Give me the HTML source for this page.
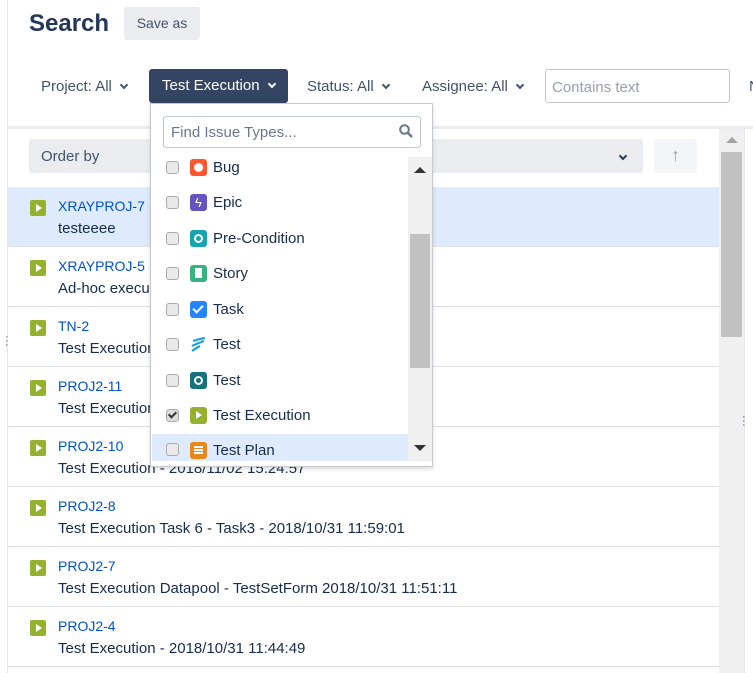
<!DOCTYPE html>
<html><head><style>
*{box-sizing:border-box;margin:0;padding:0}
body{width:753px;height:673px;overflow:hidden;background:#fff;font-family:"Liberation Sans",Arial,sans-serif;color:#172b4d;position:relative}
.a{position:absolute}
.t{font-size:15px;color:#42526e}
.chev{display:inline-block;width:6px;height:6px;border-right:2px solid #42526e;border-bottom:2px solid #42526e;transform:rotate(45deg);margin-left:9px;position:relative;top:-3px}
.row{position:absolute;left:8px;width:711px;height:60px;border-bottom:1px solid #dfe1e6}
.ic{position:absolute;left:22px;top:13px;width:16px;height:16px;background:#94b22f;border-radius:2px}
.ic:after{content:"";position:absolute;left:6px;top:4px;border-left:6px solid #fff;border-top:4px solid transparent;border-bottom:4px solid transparent}
.key{position:absolute;left:50px;top:11px;font-size:14px;color:#0052cc}
.sum{position:absolute;left:50px;top:33px;font-size:15px;color:#172b4d;white-space:nowrap}
.it{position:absolute;left:1px;width:256px;height:28px}
.cb{position:absolute;left:14px;top:7px;width:13px;height:13px;border:1px solid #aaa;border-radius:3px;background:#e9e9e9}
.ii{position:absolute;left:38px;top:5px;width:17px;height:17px;border-radius:3px}
.il{position:absolute;left:61px;top:5px;font-size:15px;color:#172b4d}
</style></head><body>
<div class="a" style="left:7px;top:0;width:1px;height:673px;background:#e6e6e9"></div>
<div class="a" style="left:29px;top:10px;font-size:24px;font-weight:bold;color:#253858">Search</div>
<div class="a" style="left:124px;top:7px;width:76px;height:33px;background:#ebecf0;border-radius:3px;font-size:14px;color:#42526e;text-align:center;line-height:33px">Save as</div>
<div class="a t" style="left:41px;top:78px">Project: All<span class="chev"></span></div>
<div class="a" style="left:149px;top:69px;width:139px;height:34px;background:#344563;border-radius:3px;color:#fff;font-size:15px;line-height:34px;padding-left:13px">Test Execution<span class="chev" style="border-color:#fff"></span></div>
<div class="a t" style="left:307px;top:78px">Status: All<span class="chev"></span></div>
<div class="a t" style="left:422px;top:78px">Assignee: All<span class="chev"></span></div>
<div class="a" style="left:545px;top:69px;width:185px;height:34px;border:1px solid #c1c7d0;border-radius:3px;font-size:15px;color:#97a0af;padding:9px 6px">Contains text</div>
<div class="a t" style="left:749px;top:78px">N</div>
<div class="a" style="left:8px;top:126px;width:745px;height:3px;background:#ebecf0"></div>
<div class="a" style="left:29px;top:139px;width:614px;height:34px;background:#ebecf0;border-radius:3px;font-size:15px;color:#42526e;padding:9px 12px">Order by</div>
<div class="a" style="left:620px;top:149px"><span class="chev" style="border-color:#253858;margin:0"></span></div>
<div class="a" style="left:654px;top:139px;width:43px;height:34px;background:#f4f5f7;border-radius:3px;color:#97a0af;font-size:18px;text-align:center;line-height:32px;font-weight:bold">↑</div>
<div class="row" style="top:187px;background:#deebff"><div class="ic"></div><div class="key">XRAYPROJ-7</div><div class="sum">testeeee</div></div>
<div class="row" style="top:247px"><div class="ic"></div><div class="key">XRAYPROJ-5</div><div class="sum">Ad-hoc execu</div></div>
<div class="row" style="top:307px"><div class="ic"></div><div class="key">TN-2</div><div class="sum">Test Execution</div></div>
<div class="row" style="top:367px"><div class="ic"></div><div class="key">PROJ2-11</div><div class="sum">Test Execution</div></div>
<div class="row" style="top:427px"><div class="ic"></div><div class="key">PROJ2-10</div><div class="sum">Test Execution - 2018/11/02 15:24:57</div></div>
<div class="row" style="top:487px"><div class="ic"></div><div class="key">PROJ2-8</div><div class="sum">Test Execution Task 6 - Task3 - 2018/10/31 11:59:01</div></div>
<div class="row" style="top:547px"><div class="ic"></div><div class="key">PROJ2-7</div><div class="sum">Test Execution Datapool - TestSetForm 2018/10/31 11:51:11</div></div>
<div class="row" style="top:607px"><div class="ic"></div><div class="key">PROJ2-4</div><div class="sum">Test Execution - 2018/10/31 11:44:49</div></div>
<div class="a" style="left:719px;top:129px;width:25px;height:544px;background:#f0f0f0"></div>
<div class="a" style="left:726px;top:137px;border-bottom:6px solid #a3a3a3;border-left:6px solid transparent;border-right:6px solid transparent"></div>
<div class="a" style="left:721px;top:152px;width:21px;height:185px;background:#c1c1c1"></div>
<div class="a" style="left:744px;top:129px;width:1px;height:544px;background:#e6e6e9"></div>
<div class="a" style="left:5px;top:335px;font-size:11px;color:#42526e;line-height:4px">·<br>·<br>·</div>
<div class="a" style="left:742px;top:415px;font-size:11px;color:#42526e;line-height:4px">·<br>·<br>·</div>
<div class="a" style="left:150px;top:103px;width:283px;height:364px;background:#fff;border:1px solid #c8cad0;box-shadow:0 2px 4px rgba(0,0,0,.15)">
 <div class="a" style="left:12px;top:12px;width:258px;height:32px;border:1px solid #c1c7d0;border-radius:3px;font-size:15px;color:#6b778c;padding:7px 7px">Find Issue Types...</div>
 <svg class="a" style="left:248px;top:20px" width="14" height="14" viewBox="0 0 14 14"><circle cx="5.5" cy="5.5" r="4.3" fill="none" stroke="#6b778c" stroke-width="2"/><path d="M8.5 8.5L13 13" stroke="#6b778c" stroke-width="2.4"/></svg>
 <div class="it" style="top:50px"><div class="cb"></div><div class="ii" style="background:#ff5630"><div class="a" style="left:4px;top:4px;width:9px;height:9px;border-radius:50%;background:#fff"></div></div><div class="il">Bug</div></div>
 <div class="it" style="top:85px"><div class="cb"></div><div class="ii" style="background:#6554c0;color:#fff;font-size:13px;text-align:center;line-height:17px">ϟ</div><div class="il">Epic</div></div>
 <div class="it" style="top:121px"><div class="cb"></div><div class="ii" style="background:#15a4b3"><div class="a" style="left:4px;top:4px;width:9px;height:9px;border-radius:50%;border:2px solid #fff"></div></div><div class="il">Pre-Condition</div></div>
 <div class="it" style="top:156px"><div class="cb"></div><div class="ii" style="background:#36b37e"><div class="a" style="left:5px;top:3px;width:7px;height:10px;background:#fff"></div></div><div class="il">Story</div></div>
 <div class="it" style="top:192px"><div class="cb"></div><div class="ii" style="background:#2684ff"><div class="a" style="left:5px;top:2px;width:6px;height:10px;border-right:2.5px solid #fff;border-bottom:2.5px solid #fff;transform:rotate(45deg)"></div></div><div class="il">Task</div></div>
 <div class="it" style="top:227px"><div class="cb"></div><svg class="a" style="left:38px;top:5px" width="17" height="17" viewBox="0 0 17 17"><path d="M3 5Q9 3 15 2M2 10Q8 7 14 5M2 15Q6 12 10 10" stroke="#1fa0d8" stroke-width="2.2" fill="none"/></svg><div class="il">Test</div></div>
 <div class="it" style="top:263px"><div class="cb"></div><div class="ii" style="background:#16717f"><div class="a" style="left:4px;top:4px;width:9px;height:9px;border-radius:50%;border:2.5px solid #fff"></div></div><div class="il">Test</div></div>
 <div class="it" style="top:298px"><div class="cb" style="background:#ddd"><div class="a" style="left:3px;top:0;width:5px;height:8px;border-right:2px solid #333;border-bottom:2px solid #333;transform:rotate(45deg)"></div></div><div class="ii" style="background:#94b22f"><div class="a" style="left:6px;top:4px;border-left:6px solid #fff;border-top:4px solid transparent;border-bottom:4px solid transparent"></div></div><div class="il">Test Execution</div></div>
 <div class="it" style="top:330px;height:27px;background:#deebff"><div class="cb" style="top:9px"></div><div class="ii" style="top:8px;background:#e8871e"><div class="a" style="left:4px;top:4px;width:9px;height:2px;background:#fff;box-shadow:0 3px 0 #fff,-0px 6px 0 #fff"></div></div><div class="il" style="top:8px">Test Plan</div></div>
 <div class="a" style="left:257px;top:53px;width:24px;height:304px;background:#f0f0f0"></div>
 <div class="a" style="left:263px;top:63px;border-bottom:6px solid #333;border-left:6px solid transparent;border-right:6px solid transparent"></div>
 <div class="a" style="left:259px;top:130px;width:20px;height:134px;background:#c1c1c1"></div>
 <div class="a" style="left:263px;top:341px;border-top:6px solid #333;border-left:6px solid transparent;border-right:6px solid transparent"></div>
</div>
</body></html>
